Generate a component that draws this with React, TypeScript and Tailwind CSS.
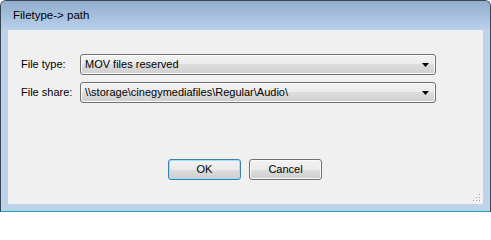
import React from 'react';

const font = { fontFamily: '"Liberation Sans", Arial, sans-serif' };

const ComboBox = ({ value }: { value: string }) => (
  <div className="flex h-[21px] w-[356px] items-center justify-between rounded-[3px] border border-[#707070] bg-[linear-gradient(to_bottom,#f2f2f2_0%,#ebebeb_50%,#dddddd_50%,#cfcfcf_100%)] pl-[4px] pr-[5px] shadow-[inset_0_0_0_1px_#fbfbfb]">
    <span className="text-[11px] leading-none text-black">{value}</span>
    <svg width="7" height="4" viewBox="0 0 7 4" className="mr-[1px]">
      <path d="M0 0H7L3.5 4Z" fill="#000" />
    </svg>
  </div>
);

const FieldRow = ({ label, value }: { label: string; value: string }) => (
  <div className="flex items-center">
    <span className="w-[59px] text-[11px] leading-none text-black">{label}</span>
    <ComboBox value={value} />
  </div>
);

const DialogButton = ({ label, isDefault = false }: { label: string; isDefault?: boolean }) => (
  <button
    className={`flex h-[21px] w-[73px] items-center justify-center rounded-[3px] border text-[11px] leading-none text-black bg-[linear-gradient(to_bottom,#f2f2f2_0%,#ebebeb_50%,#dddddd_50%,#cfcfcf_100%)] ${
      isDefault
        ? 'border-[#3c7fb1] shadow-[inset_0_0_0_1px_#9ee0fa]'
        : 'border-[#707070] shadow-[inset_0_0_0_1px_#fbfbfb]'
    }`}
  >
    {label}
  </button>
);

const Grip = () => (
  <svg width="8" height="8" viewBox="0 0 8 8" className="absolute bottom-[2px] right-[2px]">
    {[
      [6, 0],
      [3, 3],
      [6, 3],
      [0, 6],
      [3, 6],
      [6, 6],
    ].map(([x, y], i) => (
      <g key={i}>
        <rect x={x + 1} y={y + 1} width="1" height="1" fill="#ffffff" />
        <rect x={x} y={y} width="1" height="1" fill="#a0a0a0" />
      </g>
    ))}
  </svg>
);

export default function App() {
  return (
    <div className="h-[212px] w-[491px] bg-white" style={font}>
      <div className="flex h-full w-full flex-col overflow-hidden rounded-t-[6px] border border-[#3b4652] border-b-[#1f9fb3] bg-[#bdd3ea]">
        <div className="flex h-[29px] items-center bg-[linear-gradient(to_bottom,#91adce,#bad1ea)] pl-[12px]">
          <span className="text-[11.5px] leading-none text-black">Filetype-&gt; path</span>
        </div>
        <div className="flex flex-1 flex-col px-[7px] pb-[7px]">
          <div className="relative flex flex-1 flex-col bg-[#f0f0f0] pl-[13px] pt-[24px]">
            <div className="flex flex-col gap-[7px]">
              <FieldRow label="File type:" value="MOV files reserved" />
              <FieldRow label="File share:" value="\\storage\cinegymediafiles\Regular\Audio\" />
            </div>
            <div className="mt-[56px] flex gap-[8px] pl-[147px]">
              <DialogButton label="OK" isDefault />
              <DialogButton label="Cancel" />
            </div>
            <Grip />
          </div>
        </div>
      </div>
    </div>
  );
}
